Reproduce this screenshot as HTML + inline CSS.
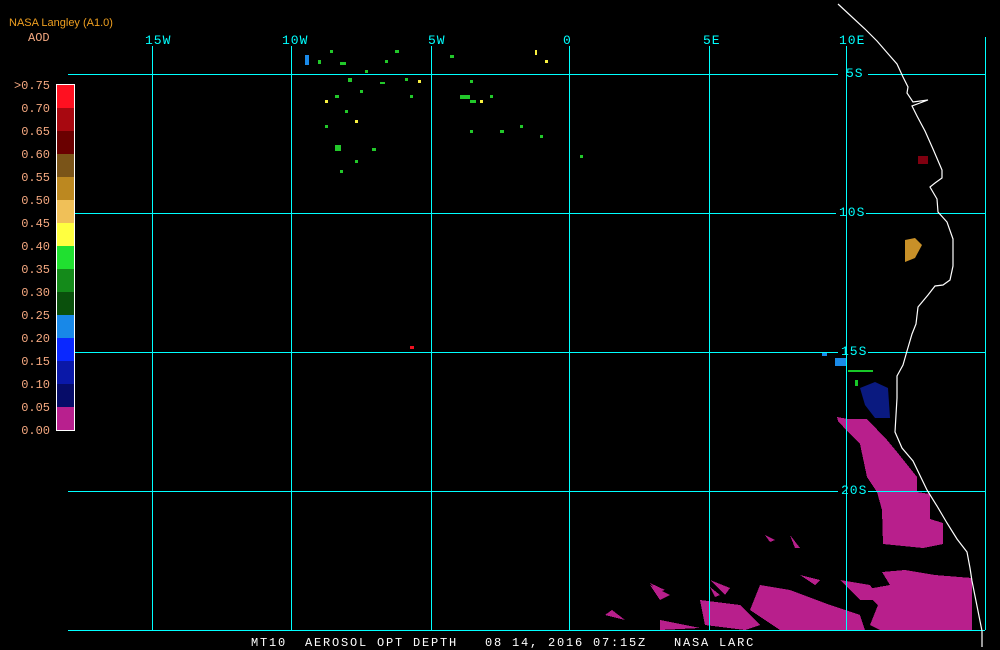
<!DOCTYPE html>
<html><head><style>
body{margin:0;background:#000;width:1000px;height:650px;overflow:hidden;position:relative;font-family:"Liberation Mono",monospace}
.t{position:absolute;white-space:pre;font-size:12px;line-height:12px}
.c{color:#00ffff;font-size:13px;letter-spacing:1px}
.l{color:#f4a880;font-size:12px;letter-spacing:0px;text-align:right;width:50px;left:0}
</style></head><body>
<svg width="1000" height="650" style="position:absolute;left:0;top:0">
<g fill="#b81f8c" shape-rendering="crispEdges">
<polygon points="837,417 848,419 867,419 887,440 897,452 917,477 917,492 930,494 930,519 943,523 943,544 923,548 883,544 882,510 877,492 867,477 860,444 848,432 838,421"/>
<polygon points="882,572 905,570 935,575 972,578 972,630 880,630 870,625 878,605 862,590 890,585"/>
<polygon points="840,580 870,585 880,600 860,600"/>
<polygon points="760,585 790,590 830,605 860,615 865,630 780,630 750,610"/>
<polygon points="700,600 740,605 760,625 745,630 705,625"/>
<polygon points="650,585 670,595 660,600"/><polygon points="710,580 730,588 725,595"/>
<polygon points="800,575 820,580 815,585"/><polygon points="660,620 700,628 660,630"/>
<polygon points="605,615 625,620 612,610"/>
<polygon points="765,535 775,540 770,542"/><polygon points="790,535 800,548 795,548"/>
<polygon points="650,583 665,590 658,592"/><polygon points="710,587 720,595 715,597"/>
</g>
<g fill="#0a1a80"><polygon points="860,388 875,382 888,388 890,418 875,418 865,405"/></g>
<g fill="#1a8ae8"><rect x="835" y="358" width="12" height="8"/><rect x="822" y="352" width="5" height="4"/><rect x="305" y="55" width="4" height="10"/></g>
<g fill="#18c828"><rect x="848" y="370" width="25" height="2"/><rect x="855" y="380" width="3" height="6"/></g>
<g fill="#c89028"><polygon points="905,240 915,238 922,245 915,258 905,262"/></g>
<rect x="918" y="156" width="10" height="8" fill="#800010"/>
<g fill="#22c82a">
<rect x="330" y="50" width="3" height="3"/><rect x="340" y="62" width="6" height="3"/><rect x="348" y="78" width="4" height="4"/><rect x="360" y="90" width="3" height="3"/><rect x="395" y="50" width="4" height="3"/><rect x="405" y="78" width="3" height="3"/><rect x="380" y="82" width="5" height="2"/><rect x="335" y="145" width="6" height="6"/><rect x="355" y="160" width="3" height="3"/><rect x="460" y="95" width="10" height="4"/><rect x="470" y="100" width="6" height="3"/><rect x="500" y="130" width="4" height="3"/><rect x="520" y="125" width="3" height="3"/><rect x="580" y="155" width="3" height="3"/><rect x="450" y="55" width="4" height="3"/><rect x="372" y="148" width="4" height="3"/>
<rect x="318" y="60" width="3" height="4"/><rect x="335" y="95" width="4" height="3"/><rect x="345" y="110" width="3" height="3"/><rect x="365" y="70" width="3" height="3"/><rect x="385" y="60" width="3" height="3"/><rect x="410" y="95" width="3" height="3"/><rect x="325" y="125" width="3" height="3"/><rect x="340" y="170" width="3" height="3"/><rect x="470" y="80" width="3" height="3"/><rect x="490" y="95" width="3" height="3"/><rect x="540" y="135" width="3" height="3"/><rect x="470" y="130" width="3" height="3"/>
</g>
<g fill="#f8f040">
<rect x="325" y="100" width="3" height="3"/><rect x="355" y="120" width="3" height="3"/><rect x="480" y="100" width="3" height="3"/><rect x="535" y="50" width="2" height="5"/><rect x="418" y="80" width="3" height="3"/><rect x="545" y="60" width="3" height="3"/>
</g>
<rect x="410" y="346" width="4" height="3" fill="#f01020"/>
<g stroke="#00ffff" stroke-width="1" fill="none" shape-rendering="crispEdges">
<line x1="68" y1="74.5" x2="838" y2="74.5"/><line x1="868" y1="74.5" x2="985" y2="74.5"/>
<line x1="68" y1="213.5" x2="836" y2="213.5"/><line x1="866" y1="213.5" x2="985" y2="213.5"/>
<line x1="68" y1="352.5" x2="838" y2="352.5"/><line x1="868" y1="352.5" x2="985" y2="352.5"/>
<line x1="68" y1="491.5" x2="838" y2="491.5"/><line x1="868" y1="491.5" x2="985" y2="491.5"/>
<line x1="68" y1="630.5" x2="985" y2="630.5"/>
<line x1="152.5" y1="46" x2="152.5" y2="630"/><line x1="291.5" y1="46" x2="291.5" y2="630"/>
<line x1="431.5" y1="46" x2="431.5" y2="630"/><line x1="569.5" y1="46" x2="569.5" y2="630"/>
<line x1="709.5" y1="46" x2="709.5" y2="630"/><line x1="846.5" y1="46" x2="846.5" y2="630"/>
<line x1="985.5" y1="37" x2="985.5" y2="630"/>
</g>
<polyline fill="none" stroke="#fff" stroke-width="1.2" points="838,4 865,29 877,41 890,56 897,64 903,77 908,87 907,93 913,102 928,100 912,106 917,116 925,131 933,149 942,170 942,178 935,183 930,187 937,199 938,212 947,222 953,239 953,266 950,280 943,285 935,286 928,295 918,307 916,324 912,334 907,351 903,365 897,376 897,398 895,432 902,448 913,461 927,490 937,506 947,523 957,539 967,552 970,568 972,581 977,606 982,631 982,647"/>
<g shape-rendering="crispEdges">
<rect x="57" y="85" width="17" height="23" fill="#ff1020"/>
<rect x="57" y="108" width="17" height="23" fill="#a80810"/>
<rect x="57" y="131" width="17" height="23" fill="#6a0000"/>
<rect x="57" y="154" width="17" height="23" fill="#7a5418"/>
<rect x="57" y="177" width="17" height="23" fill="#bc8820"/>
<rect x="57" y="200" width="17" height="23" fill="#f0c058"/>
<rect x="57" y="223" width="17" height="23" fill="#ffff40"/>
<rect x="57" y="246" width="17" height="23" fill="#20e030"/>
<rect x="57" y="269" width="17" height="23" fill="#148a1a"/>
<rect x="57" y="292" width="17" height="23" fill="#0a500c"/>
<rect x="57" y="315" width="17" height="23" fill="#1888e8"/>
<rect x="57" y="338" width="17" height="23" fill="#0a28ff"/>
<rect x="57" y="361" width="17" height="23" fill="#0a18a8"/>
<rect x="57" y="384" width="17" height="23" fill="#060c68"/>
<rect x="57" y="407" width="17" height="23" fill="#b8208e"/>
<rect x="56.5" y="84.5" width="18" height="346" fill="none" stroke="#fff" stroke-width="1"/>
</g>
</svg>
<div class="t" style="left:9px;top:17px;color:#f0a020;font-family:'Liberation Sans',sans-serif;font-size:11px">NASA Langley (A1.0)</div>
<div class="t" style="left:28px;top:32px;color:#f4a880;font-size:12px">AOD</div>
<div class="t l" style="top:80px">&gt;0.75</div>
<div class="t l" style="top:103px">0.70</div>
<div class="t l" style="top:126px">0.65</div>
<div class="t l" style="top:149px">0.60</div>
<div class="t l" style="top:172px">0.55</div>
<div class="t l" style="top:195px">0.50</div>
<div class="t l" style="top:218px">0.45</div>
<div class="t l" style="top:241px">0.40</div>
<div class="t l" style="top:264px">0.35</div>
<div class="t l" style="top:287px">0.30</div>
<div class="t l" style="top:310px">0.25</div>
<div class="t l" style="top:333px">0.20</div>
<div class="t l" style="top:356px">0.15</div>
<div class="t l" style="top:379px">0.10</div>
<div class="t l" style="top:402px">0.05</div>
<div class="t l" style="top:425px">0.00</div>
<div class="t c" style="left:145px;top:35px">15W</div>
<div class="t c" style="left:282px;top:35px">10W</div>
<div class="t c" style="left:428px;top:35px">5W</div>
<div class="t c" style="left:563px;top:35px">0</div>
<div class="t c" style="left:703px;top:35px">5E</div>
<div class="t c" style="left:839px;top:35px">10E</div>
<div class="t c" style="left:846px;top:68px">5S</div>
<div class="t c" style="left:839px;top:207px">10S</div>
<div class="t c" style="left:841px;top:346px">15S</div>
<div class="t c" style="left:841px;top:485px">20S</div>
<div class="t" style="left:251px;top:637px;color:#fff;font-size:12px;letter-spacing:1.8px">MT10  AEROSOL OPT DEPTH   08 14, 2016 07:15Z   NASA LARC</div>
</body></html>
